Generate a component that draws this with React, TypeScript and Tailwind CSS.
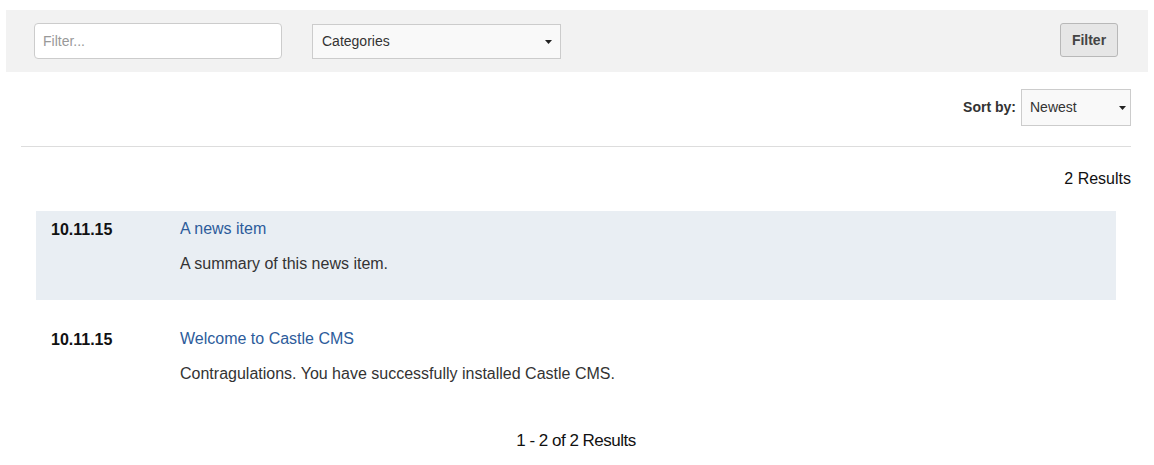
import React from "react";

const Caret = () => (
  <svg width="7" height="4" viewBox="0 0 7 4" className="block">
    <path d="M0 0 H7 L3.5 4 Z" fill="#222" />
  </svg>
);

export default function App() {
  const items = [
    { date: "10.11.15", title: "A news item", summary: "A summary of this news item.", shaded: true },
    { date: "10.11.15", title: "Welcome to Castle CMS", summary: "Contragulations. You have successfully installed Castle CMS.", shaded: false },
  ];
  return (
    <div className="w-[1154px] h-[465px] bg-white pt-[10px] text-[#333]" style={{ fontFamily: '"Liberation Sans", Arial, sans-serif' }}>
      <div className="mx-[6px] h-[62px] bg-[#f2f2f2] flex items-start pl-[28px] pr-[30px] pt-[13px]">
        <div className="w-[248px] h-[36px] bg-white border border-[#cccccc] rounded-[4px] flex items-center pl-[8px] text-[14px] text-[#999]">
          Filter...
        </div>
        <div className="ml-[30px] mt-[1px] w-[249px] h-[35px] bg-[#f9f9f9] border border-[#cccccc] flex items-center justify-between pl-[9px] pr-[8px] text-[14px] text-[#333]">
          <span>Categories</span>
          <Caret />
        </div>
        <div className="ml-auto w-[58px] h-[34px] bg-[#e6e6e6] border border-[#b8b8b8] rounded-[3px] flex items-center justify-center text-[14px] font-bold text-[#444]">
          Filter
        </div>
      </div>

      <div className="ml-[21px] mr-[23px]">
        <div className="flex justify-end items-center mt-[17px]">
          <span className="text-[14px] font-bold text-[#333] mr-[5px]">Sort by:</span>
          <div className="w-[110px] h-[37px] bg-[#f9f9f9] border border-[#cccccc] flex items-center justify-between pl-[8px] pr-[4px] text-[14px] text-[#333]">
            <span>Newest</span>
            <Caret />
          </div>
        </div>
        <div className="mt-[20px] border-t border-[#dddddd]" />
        <div className="mt-[21px] text-right text-[16px] leading-[22px] text-[#111]">2 Results</div>

        <div className="mx-[15px] mt-[21px] flex flex-col gap-[21px]">
          {items.map((it, i) => (
            <div key={i} className={`h-[89px] flex pl-[15px] pt-[7px] ${it.shaded ? "bg-[#e9eef3]" : ""}`}>
              <div className="w-[129px] text-[16px] font-bold text-[#111] leading-[22px] pt-[1px]">{it.date}</div>
              <div className="flex flex-col">
                <div className="text-[16px] leading-[22px] text-[#2d5c9b]">{it.title}</div>
                <div className="mt-[13px] text-[16px] leading-[22px] text-[#333]">{it.summary}</div>
              </div>
            </div>
          ))}
        </div>

        <div className="mt-[20px] text-center text-[17px] leading-[22px] tracking-[-0.5px] text-[#111]">1 - 2 of 2 Results</div>
      </div>
    </div>
  );
}
